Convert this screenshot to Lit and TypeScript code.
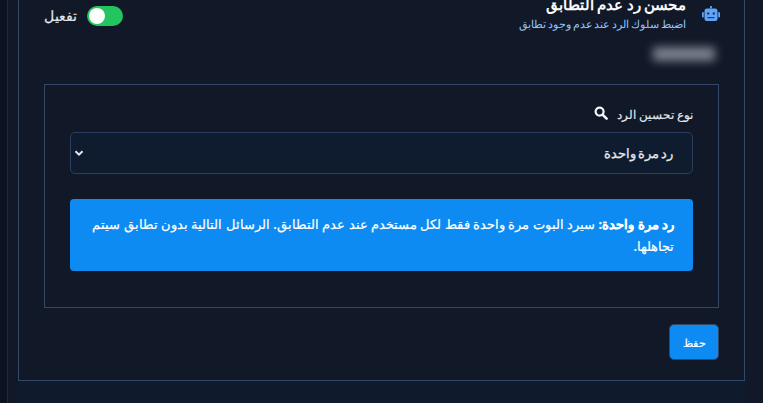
import { LitElement, html, css } from "lit";
import { customElement } from "lit/decorators.js";

@customElement("app-root")
export class AppRoot extends LitElement {
  static styles = css`
    :host { display: block; width: 763px; height: 403px; overflow: hidden; background: #0c1220; font-family: "Noto Sans", sans-serif; color: #f1f5f9; }
    .rail { box-sizing: border-box; height: 403px; margin-left: 7px; border-left: 1px solid #1e293b; background: #111827; padding-left: 10px; }
    .stage { width: 727px; height: 403px; background: #0f1a2c; }
    .card { box-sizing: border-box; height: 381px; background: #111827; border: 1px solid #334766; border-top: 0; padding: 0 25px 20px; display: flex; flex-direction: column; }
    .head { height: 84px; flex: none; display: flex; justify-content: space-between; align-items: flex-start; }
    .toggle-wrap { display: flex; align-items: center; gap: 10px; padding-top: 6px; direction: ltr; }
    .toggle-label { font-size: 14px; font-weight: 500; color: #e2e8f0; -webkit-text-stroke: 0.2px #e2e8f0; margin-top: -2px; }
    .switch { position: relative; width: 36px; height: 20px; border-radius: 10px; background: #22c55e; }
    .knob { position: absolute; left: 2px; top: 2px; width: 16px; height: 16px; border-radius: 50%; background: #fff; }
    .title-wrap { direction: rtl; display: flex; gap: 16px; align-items: flex-start; margin-right: -1px; }
    .robot { width: 18px; height: 16px; margin-top: 6px; flex: none; color: #60a5fa; }
    .title { font-size: 15px; word-spacing: -0.6px; font-weight: 700; line-height: 20px; margin-top: -6px; color: #f8fafc; }
    .subtitle { font-size: 11px; word-spacing: -1px; line-height: 16px; color: #93c5fd; margin-top: 2px; }
    .blur { width: 62px; height: 14px; margin: 15px 4px 0 auto; border-radius: 2px; background: #7c828e; filter: blur(5px); }
    .right { display: flex; flex-direction: column; }
    .box { box-sizing: border-box; height: 224px; border: 1px solid #334766; padding: 19px 25px 20px; direction: rtl; display: flex; flex-direction: column; }
    .label { display: flex; align-items: center; gap: 9px; font-size: 12px; font-weight: 500; height: 20px; color: #e2e8f0; -webkit-text-stroke: 0.15px #e2e8f0; }
    .search { margin-top: -2px; }
    .select { box-sizing: border-box; position: relative; height: 42px; margin-top: 8px; border: 1px solid #2c3e5e; border-radius: 5px; background: #0f1b2f; display: flex; align-items: center; padding: 0 19px; font-size: 13px; word-spacing: -1.4px; font-weight: 500; color: #e2e8f0; -webkit-text-stroke: 0.3px #e2e8f0; }
    .chev { position: absolute; left: 3px; top: 15px; width: 10px; height: 10px; color: #e2e8f0; }
    .alert { margin-top: 25px; box-sizing: border-box; height: 72px; padding: 14px 19px; border-radius: 4px; background: #0d8bf2; color: #fff; font-size: 13px; font-weight: 500; line-height: 22px; -webkit-text-stroke: 0.2px #fff; }
    .alert b { font-weight: 700; }
    .foot { display: flex; justify-content: flex-end; margin-top: 16px; }
    .save { box-sizing: border-box; width: 50px; height: 36px; border: 1px solid #334766; border-radius: 5px; background: #0d8bf2; color: #fff; font: 500 11px "Noto Sans", sans-serif; -webkit-text-stroke: 0.2px #fff; }
  `;

  render() {
    return html`
      <div class="rail">
        <div class="stage">
          <div class="card">
            <div class="head">
              <div class="toggle-wrap">
                <span class="toggle-label" dir="rtl">تفعيل</span>
                <span class="switch"><span class="knob"></span></span>
              </div>
              <div class="right">
                <div class="title-wrap">
                  <svg class="robot" viewBox="0 0 18 16" fill="currentColor">
                    <rect x="8.4" y="0" width="1.2" height="2.5" />
                    <circle cx="9" cy="1" r="1" />
                    <rect x="2.5" y="2.5" width="13" height="12.5" rx="2.5" />
                    <rect x="0" y="6" width="1.8" height="5.5" rx="0.8" />
                    <rect x="16.2" y="6" width="1.8" height="5.5" rx="0.8" />
                    <circle cx="6.2" cy="7.5" r="1.2" fill="#1e3a6a" />
                    <circle cx="11.8" cy="7.5" r="1.2" fill="#1e3a6a" />
                    <rect x="5.5" y="11" width="7" height="1.2" fill="#1e3a6a" />
                  </svg>
                  <div>
                    <div class="title">محسن رد عدم التطابق</div>
                    <div class="subtitle">اضبط سلوك الرد عند عدم وجود تطابق</div>
                  </div>
                </div>
                <div class="blur"></div>
              </div>
            </div>
            <div class="box">
              <div class="label">
                <span>نوع تحسين الرد</span>
                <svg class="search" width="14" height="14" viewBox="0 0 14 14" fill="none" stroke="#f1f5f9" aria-hidden="true">
                  <circle cx="5.6" cy="5.6" r="4" stroke-width="2.2" />
                  <line x1="8.8" y1="8.8" x2="12.6" y2="12.6" stroke-width="2.6" stroke-linecap="round" />
                </svg>
              </div>
              <div class="select">
                <span>رد مرة واحدة</span>
                <svg class="chev" viewBox="0 0 10 10" fill="none" stroke="currentColor" stroke-width="2">
                  <path d="M1.5 3.2 L5 6.7 L8.5 3.2" />
                </svg>
              </div>
              <div class="alert">
                <b>رد مرة واحدة:</b> سيرد البوت مرة واحدة فقط لكل مستخدم عند عدم التطابق. الرسائل التالية بدون تطابق سيتم تجاهلها.
              </div>
            </div>
            <div class="foot"><button class="save">حفظ</button></div>
          </div>
        </div>
      </div>
    `;
  }
}
